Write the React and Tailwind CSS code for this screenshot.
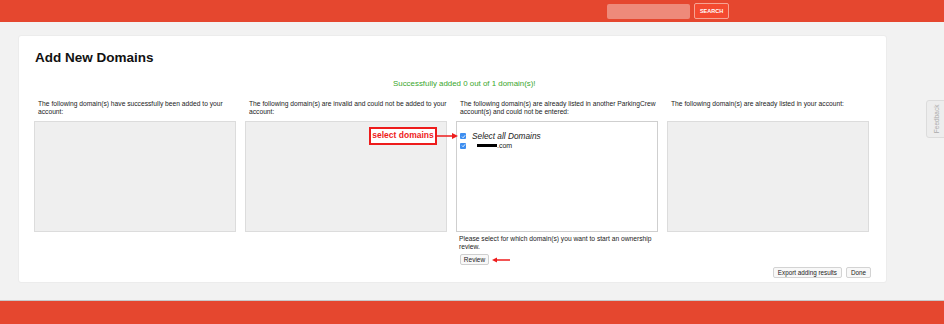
import React from "react";

function Check() {
  return (
    <span className="flex h-[6px] w-[6px] shrink-0 items-center justify-center rounded-[1px] bg-[#3d8ef0]">
      <svg width="5" height="5" viewBox="0 0 10 10">
        <path d="M2 5.2 L4.2 7.4 L8.2 2.6" fill="none" stroke="#fff" strokeWidth="1.8" />
      </svg>
    </span>
  );
}

function Column({ label, children, white }) {
  return (
    <div className="flex w-[202px] shrink-0 flex-col">
      <div className="h-[17px] pl-[4px] pr-0 text-[6.7px] leading-[8.5px] text-[#222]">{label}</div>
      <div
        className={
          "mt-[4.5px] h-[111px] border " +
          (white ? "border-[#cfcfcf] bg-white" : "border-[#dcdcdc] bg-[#efefef]")
        }
      >
        {children}
      </div>
    </div>
  );
}

export default function App() {
  return (
    <div
      className="relative flex h-[324px] w-[944px] flex-col overflow-hidden bg-[#f2f2f2]"
      style={{ fontFamily: '"Liberation Sans", Arial, sans-serif' }}
    >
      {/* header */}
      <div className="flex h-[22px] shrink-0 items-start bg-[#e5472f] pt-[3px]">
        <div className="ml-[607px] mt-[1px] h-[15px] w-[83px] rounded-[2px] bg-[#ee8a7a]" />
        <div className="ml-[4px] flex h-[16px] w-[35px] items-center justify-center rounded-[2px] border border-[#f6a393] bg-[#f44a30] text-[5.5px] font-bold text-white">
          SEARCH
        </div>
      </div>

      {/* main */}
      <div className="flex-1 pt-[13px]">
        <div className="ml-[18px] h-[248px] w-[869px] rounded-[3px] border border-[#ececec] bg-white px-[15px] pt-[14px]">
          <div className="pl-[1px] text-[13.5px] font-bold leading-[16px] text-[#111]">Add New Domains</div>
          <div className="mt-[13px] pl-[359px] text-[7.9px] leading-[10px] text-[#3aa62c]">
            Successfully added 0 out of 1 domain(s)!
          </div>

          <div className="mt-[10.5px] flex gap-[9px]">
            <Column label="The following domain(s) have successfully been added to your account:" />
            <div className="relative shrink-0">
              <Column label="The following domain(s) are invalid and could not be added to your account:" />
              <div className="absolute left-[124px] top-[27px] flex h-[18px] w-[68px] items-center justify-center border-2 border-[#ee1c1c] bg-white text-[8.5px] font-bold text-[#ee1c1c]">
                select domains
              </div>
              <svg className="absolute left-[192px] top-[32px]" width="22" height="8" viewBox="0 0 22 8">
                <line x1="0" y1="4" x2="17" y2="4" stroke="#ee1c1c" strokeWidth="1.5" />
                <path d="M15 1 L21 4 L15 7 Z" fill="#ee1c1c" />
              </svg>
            </div>
            <div className="flex w-[202px] shrink-0 flex-col">
              <Column
                white
                label="The following domain(s) are already listed in another ParkingCrew account(s) and could not be entered:"
              >
                <div className="flex flex-col pl-[3px] pt-[10px]">
                  <div className="flex items-center gap-[6px]">
                    <Check />
                    <span className="text-[8.3px] italic leading-[8px] text-[#222]">Select all Domains</span>
                  </div>
                  <div className="mt-[2px] flex items-center gap-[6px]">
                    <Check />
                    <span className="ml-[5px] flex items-center text-[7px] leading-[7px] text-[#222]">
                      <span className="inline-block h-[3.5px] w-[20px] bg-black" />
                      .com
                    </span>
                  </div>
                </div>
              </Column>
              <div className="mt-[3px] px-[3px] text-[6.7px] leading-[8px] text-[#222]">
                Please select for which domain(s) you want to start an ownership review.
              </div>
              <div className="mt-[3px] flex items-center pl-[4px]">
                <div className="flex h-[11px] w-[29px] items-center justify-center rounded-[2px] border border-[#cfcfcf] bg-[#f8f8f8] text-[6.5px] text-[#222]">
                  Review
                </div>
                <svg className="ml-[3px]" width="18" height="6" viewBox="0 0 18 6">
                  <path d="M0 3 L5 0.5 L5 5.5 Z" fill="#ee1c1c" />
                  <line x1="4" y1="3" x2="18" y2="3" stroke="#ee1c1c" strokeWidth="1.5" />
                </svg>
              </div>
            </div>
            <Column label="The following domain(s) are already listed in your account:" />
          </div>

          <div className="mt-[2px] flex justify-end gap-[4px]">
            <div className="flex h-[11px] items-center rounded-[2px] border border-[#d3d3d3] bg-[#f8f8f8] px-[4px] text-[6.3px] text-[#222]">
              Export adding results
            </div>
            <div className="flex h-[11px] items-center rounded-[2px] border border-[#d3d3d3] bg-[#f8f8f8] px-[4px] text-[6.3px] text-[#222]">
              Done
            </div>
          </div>
        </div>
      </div>

      {/* feedback tab */}
      <div className="absolute left-[926px] top-[100px] flex h-[38px] w-[22px] items-center justify-center rounded-l-[3px] border border-[#dcdcdc] bg-[#ededed]">
        <span className="-rotate-90 whitespace-nowrap text-[6.5px] text-[#aaa]">Feedback</span>
      </div>

      {/* footer */}
      <div className="h-[24px] shrink-0 border-t border-[#c8c8c8] bg-[#e5472f]" />
    </div>
  );
}
